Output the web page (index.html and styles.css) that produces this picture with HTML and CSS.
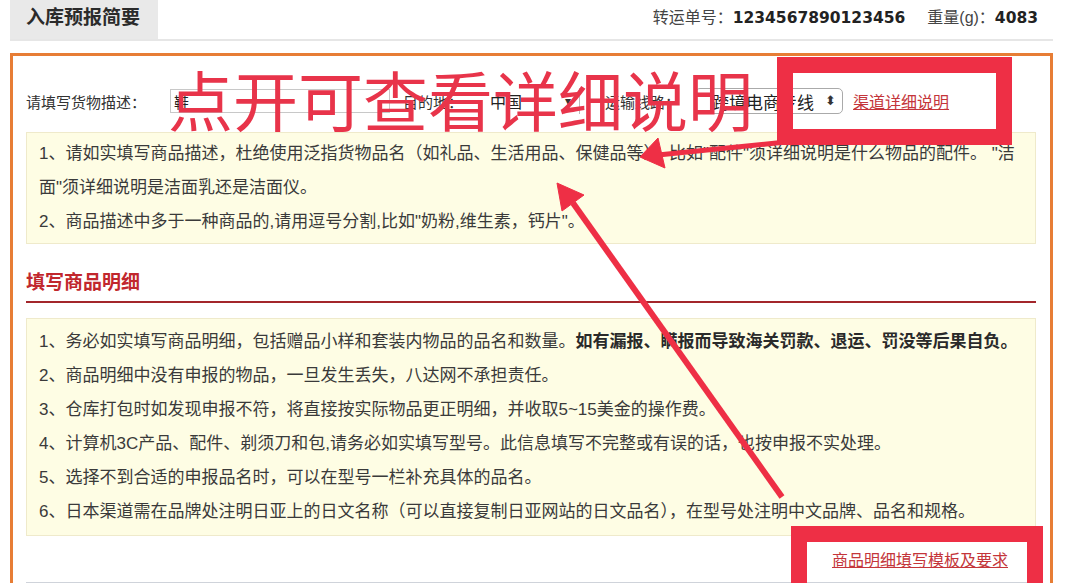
FILE: index.html
```html
<!DOCTYPE html>
<html lang="zh-CN">
<head>
    <meta charset="UTF-8">
    <title>入库预报简要</title>
    <link rel="stylesheet" href="styles.css">
</head>
<body>
    <div class="page">
        <div class="summary-head">
            <div class="tab">入库预报简要</div>
            <div class="ship-info">转运单号：<b>1234567890123456</b><span class="gap"></span>重量(g)：<b>4083</b></div>
        </div>

        <div class="forecast-box">
            <div class="desc-row">
                <label class="lbl-desc">请填写货物描述：</label>
                <input class="desc-input" type="text" value="鞋">
                <label class="lbl-dest">目的地：</label>
                <span class="select-wrap plain">
                    <select class="country"><option>中国</option></select>
                </span>
                <label class="lbl-line">运输线路：</label>
                <span class="select-wrap round">
                    <select class="route"><option>跨境电商专线</option></select>
                </span>
                <a class="red-link channel-link" href="#">渠道详细说明</a>
            </div>

            <div class="note desc-note">
                <p>1、请如实填写商品描述，杜绝使用泛指货物品名（如礼品、生活用品、保健品等），比如"配件"须详细说明是什么物品的配件。 "洁面"须详细说明是洁面乳还是洁面仪。</p>
                <p>2、商品描述中多于一种商品的,请用逗号分割,比如"奶粉,维生素，钙片"。</p>
            </div>

            <h3 class="section-title">填写商品明细</h3>

            <div class="note detail-note">
                <p>1、务必如实填写商品明细，包括赠品小样和套装内物品的品名和数量。<b>如有漏报、瞒报而导致海关罚款、退运、罚没等后果自负。</b></p>
                <p>2、商品明细中没有申报的物品，一旦发生丢失，八达网不承担责任。</p>
                <p>3、仓库打包时如发现申报不符，将直接按实际物品更正明细，并收取5~15美金的操作费。</p>
                <p>4、计算机3C产品、配件、剃须刀和包,请务必如实填写型号。此信息填写不完整或有误的话，也按申报不实处理。</p>
                <p>5、选择不到合适的申报品名时，可以在型号一栏补充具体的品名。</p>
                <p>6、日本渠道需在品牌处注明日亚上的日文名称（可以直接复制日亚网站的日文品名），在型号处注明中文品牌、品名和规格。</p>
            </div>

            <div class="template-row">
                <a class="red-link" href="#">商品明细填写模板及要求</a>
            </div>
            <div class="next-block"></div>
        </div>
    </div>

    <!-- annotations drawn over the screenshot -->
    <div class="annotation-text">点开可查看详细说明</div>
    <svg class="marks" width="1080" height="583" viewBox="0 0 1080 583">
        <g fill="#ee2f45" stroke="#ee2f45">
            <line x1="782" y1="497" x2="573" y2="203" stroke-width="6"/>
            <polygon points="557,183 584,195 562,211" stroke-width="1"/>
            <line x1="786" y1="142" x2="658" y2="155" stroke-width="5"/>
            <polygon points="640,157 658,138 665,168" stroke-width="1"/>
            <rect x="785" y="65" width="219" height="72" fill="none" stroke-width="16"/>
            <rect x="799" y="534" width="236" height="60" fill="none" stroke-width="16"/>
        </g>
    </svg>
</body>
</html>
```

FILE: styles.css
```css
* {
    margin: 0;
    padding: 0;
    box-sizing: border-box;
}

body {
    width: 1080px;
    height: 583px;
    overflow: hidden;
    position: relative;
    background: #fff;
    color: #333;
    font-family: "Liberation Sans", "Noto Sans CJK SC", sans-serif;
}

.page {
    margin-left: 10px;
    width: 1043px;
}

/* header */
.summary-head {
    display: flex;
    justify-content: space-between;
    align-items: flex-start;
    height: 41px;
    border-bottom: 2px solid #e6e6e6;
}

.tab {
    height: 39px;
    background: #e9e9e9;
    padding: 0 18px 0 16px;
    font-size: 19px;
    font-weight: bold;
    line-height: 35px;
    color: #2b2b2b;
}

.ship-info {
    padding-right: 15px;
    font-size: 16px;
    line-height: 35px;
    color: #444;
}

.ship-info b {
    font-family: "DejaVu Sans", sans-serif;
    font-size: 15.5px;
    color: #222;
}

.ship-info .gap {
    display: inline-block;
    width: 22px;
}

/* orange box */
.forecast-box {
    margin-top: 12px;
    height: 530px;
    overflow: hidden;
    border: 3px solid #e77d35;
    border-bottom: none;
    padding: 31px 14px 0 13px;
}

.desc-row {
    display: flex;
    align-items: center;
    height: 28px;
    font-size: 15px;
    color: #333;
}

.desc-input {
    margin-left: 24px;
    width: 220px;
    height: 24px;
    border: 1px solid #c8c8c8;
    padding-left: 3px;
    font-size: 15px;
    font-family: "Noto Sans CJK SC", sans-serif;
    color: #222;
    outline: none;
}

.lbl-dest {
    margin-left: 13px;
}

.lbl-line {
    margin-left: 25px;
}

.select-wrap {
    position: relative;
    margin-left: 15px;
    height: 26px;
}

.select-wrap select {
    -webkit-appearance: none;
    appearance: none;
    height: 26px;
    background: #fff;
    color: #222;
    font-family: "Noto Sans CJK SC", sans-serif;
    outline: none;
}

.select-wrap::after {
    position: absolute;
    top: 0;
    line-height: 26px;
    color: #333;
    pointer-events: none;
}

.plain select {
    width: 102px;
    border: none;
    border-right: 1px solid #bbb;
    padding-left: 12px;
    font-size: 16px;
}

.plain::after {
    content: "▾";
    right: 9px;
    font-size: 12px;
}

.round select {
    width: 148px;
    border: 1px solid #aaa;
    border-radius: 5px;
    padding-left: 16px;
    font-size: 17px;
}

.round::after {
    content: "⬍";
    right: 7px;
    font-size: 13px;
}

.red-link {
    font-size: 16px;
    color: #c4353a;
    text-decoration: underline;
}

.channel-link {
    margin-left: 10px;
}

/* notes */
.note {
    background: #fefde4;
    border: 1px solid #efeacb;
    font-size: 17px;
    line-height: 34px;
    color: #3a3a3a;
}

.desc-note {
    margin-top: 17px;
    padding: 4px 6px 4px 12px;
}

.detail-note {
    margin-top: 15px;
    padding: 6px 6px 6px 12px;
}

.note b {
    color: #2a2a2a;
}

.section-title {
    margin-top: 27px;
    padding-bottom: 6px;
    border-bottom: 2px solid #a3262b;
    font-size: 19px;
    line-height: 24px;
    color: #c1272d;
}

.template-row {
    display: flex;
    justify-content: flex-end;
    align-items: center;
    height: 46px;
    padding-right: 28px;
}

.next-block {
    height: 20px;
    border-top: 2px solid #cfd3da;
    background: #fafafa;
}

/* annotations */
.annotation-text {
    position: absolute;
    left: 168px;
    top: 66px;
    font-family: "Noto Sans CJK SC", sans-serif;
    font-size: 65px;
    line-height: 65px;
    color: #e8344a;
    white-space: nowrap;
}

.marks {
    position: absolute;
    left: 0;
    top: 0;
    pointer-events: none;
}
```
